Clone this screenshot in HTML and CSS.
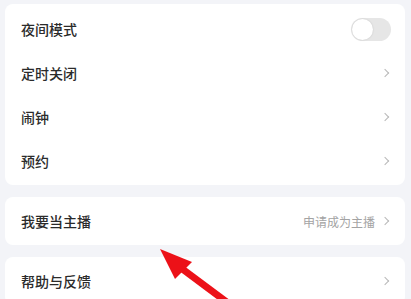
FILE: index.html
```html
<!DOCTYPE html>
<html lang="zh-CN">
<head>
    <meta charset="UTF-8">
    <meta name="viewport" content="width=device-width, initial-scale=1.0">
    <title>设置</title>
    <link rel="stylesheet" href="styles.css">
</head>
<body>
<main class="page">
  <div class="card first">
    <div class="row">
      <span class="label">夜间模式</span>
      <span class="switch"><span class="knob"></span></span>
    </div>
    <div class="row">
      <span class="label">定时关闭</span>
      <span class="chev"></span>
    </div>
    <div class="row">
      <span class="label">闹钟</span>
      <span class="chev"></span>
    </div>
    <div class="row">
      <span class="label">预约</span>
      <span class="chev"></span>
    </div>
  </div>

  <div class="card">
    <div class="row tall">
      <span class="label">我要当主播</span>
      <span class="extra">申请成为主播<span class="chev"></span></span>
    </div>
  </div>

  <div class="card">
    <div class="row tall">
      <span class="label">帮助与反馈</span>
      <span class="chev"></span>
    </div>
  </div>
</main>

<svg class="arrow" width="411" height="299" viewBox="0 0 411 299">
  <line x1="181" y1="268" x2="232" y2="306" stroke="#ec1118" stroke-width="7"/>
  <polygon points="160,249 192,262 175,279" fill="#ec1118"/>
</svg>
</body>
</html>
```

FILE: styles.css
```css
*{
  margin: 0;
  padding: 0;
  box-sizing: border-box;
}

body{
  background-color: #f3f4f8;
  font-family: "Noto Sans CJK SC", "Noto Sans", sans-serif;
  color: #2b2b2b;
  overflow: hidden;
}

.page{
  padding: 4px 6px 0 5px;
  display: flex;
  flex-direction: column;
  gap: 12px;
}

.card{
  background-color: #fff;
  border-radius: 8px;
}

.first{
  padding: 3px 0 2px;
}

.row{
  height: 44px;
  display: flex;
  align-items: center;
  justify-content: space-between;
  padding: 0 17px 0 16px;
}

.tall{
  height: 48px;
}

.label{
  font-size: 14px;
  font-weight: 500;
}

.switch{
  width: 40px;
  height: 23px;
  border-radius: 12px;
  background-color: #e6e6e6;
  display: flex;
  align-items: center;
  padding: 1px;
  margin-right: -3px;
}

.knob{
  width: 21px;
  height: 21px;
  border-radius: 50%;
  background-color: #fff;
  box-shadow: 0 0 2px rgba(0,0,0,0.15);
}

.chev{
  width: 6px;
  height: 6px;
  border-top: 1.3px solid #b8b8b8;
  border-right: 1.3px solid #b8b8b8;
  transform: rotate(45deg);
  display: inline-block;
}

.extra{
  font-size: 12px;
  color: #a3a3a3;
  display: flex;
  align-items: center;
  gap: 7px;
}

.arrow{
  position: absolute;
  left: 0;
  top: 0;
}
```
